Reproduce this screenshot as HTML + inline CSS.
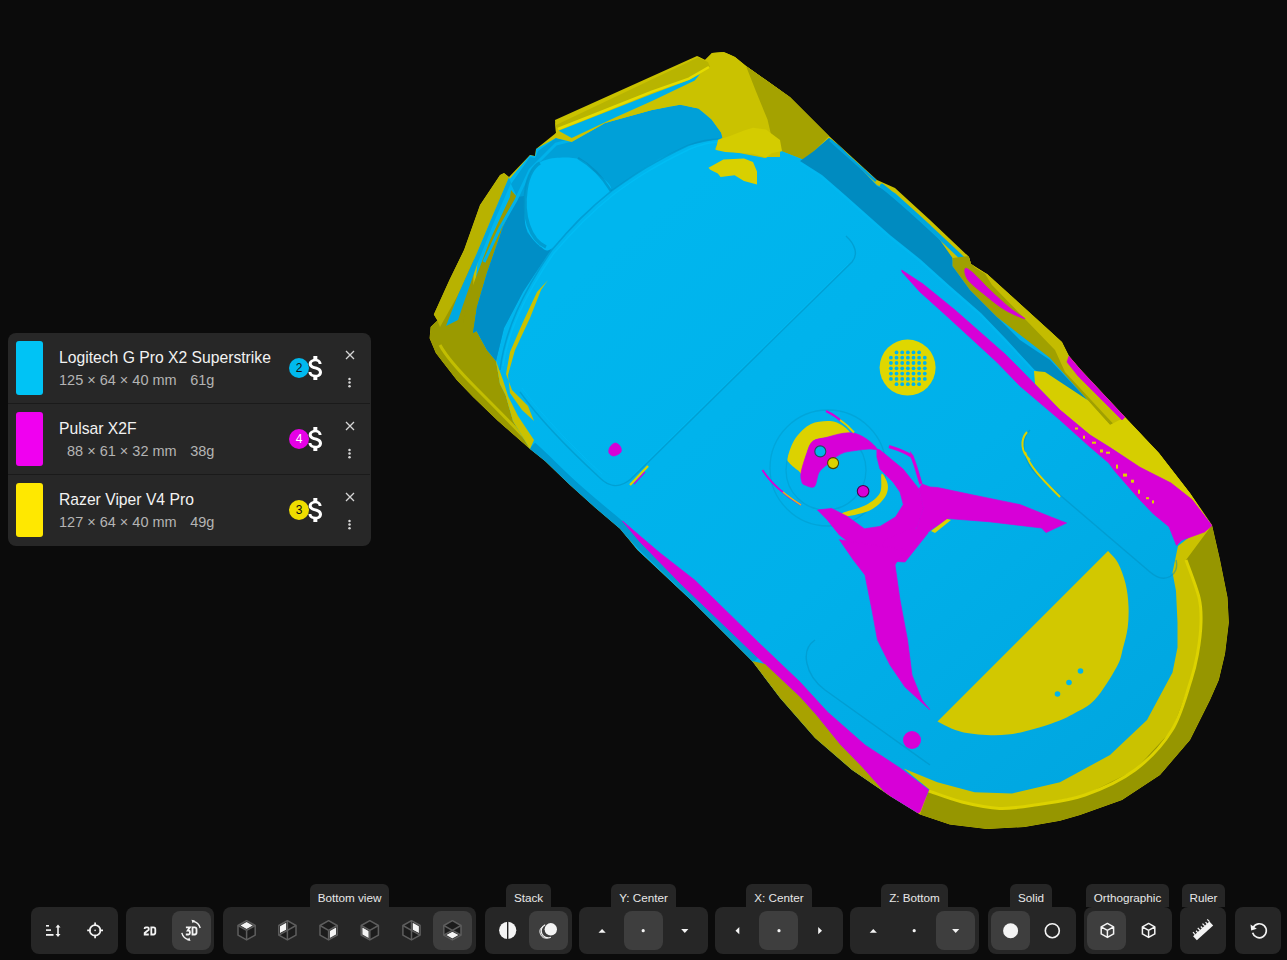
<!DOCTYPE html>
<html><head><meta charset="utf-8">
<style>
html,body{margin:0;padding:0;}
body{width:1287px;height:960px;background:#0b0b0b;position:relative;overflow:hidden;font-family:"Liberation Sans",sans-serif;color:#fff;}
#mouse{position:absolute;left:0;top:0;}
.panel{position:absolute;left:8px;top:333px;width:363px;height:213px;background:#272727;border-radius:8px;overflow:hidden;}
.row{position:absolute;left:0;width:362px;height:70px;}
.row.r1{top:0}.row.r2{top:71px}.row.r3{top:142px}
.sep{position:absolute;left:0;width:362px;height:1px;background:#1a1a1a;}
.sw{position:absolute;left:8px;top:8px;width:27px;height:54px;border-radius:3px;}
.tt{position:absolute;left:51px;top:15.5px;font-size:15.7px;color:#f2f2f2;white-space:nowrap;}
.st{position:absolute;left:51px;top:38.5px;font-size:14.5px;color:#b4b4b4;white-space:pre;}
.badge{position:absolute;left:281px;top:25px;width:20px;height:20px;border-radius:50%;font-size:12px;text-align:center;line-height:20px;}
.dol{position:absolute;left:292.3px;top:18.9px;width:32px;height:32px;}
.x{position:absolute;left:336.5px;top:16.5px;width:10px;height:10px;}
.kb{position:absolute;left:340px;top:44px;width:3px;height:11px;}
.grp{position:absolute;top:907px;height:47px;background:#262626;border-radius:8px;}
.sel{position:absolute;top:4px;width:39px;height:39px;background:#3e3e3e;border-radius:8px;}
.ic{position:absolute;}
.tip{position:absolute;top:884px;height:23px;background:#262626;border-radius:6px 6px 0 0;font-size:11.7px;color:#e8e8e8;text-align:center;line-height:28px;}
</style></head><body>
<svg id="mouse" width="1287" height="960" viewBox="0 0 1287 960">
<path d="M712.0,53.0 L724.0,52.0 L735.0,57.0 L746.0,66.0 L790.0,97.0 L829.0,136.0 L877.0,180.0 L895.0,188.0 L930.0,220.0 L969.0,257.0 L971.0,264.0 L987.0,274.0 L1062.0,342.0 L1069.0,356.0 L1081.0,370.0 L1125.0,417.0 L1159.0,453.0 L1190.0,493.0 L1212.0,525.0 L1220.0,560.0 L1227.5,597.5 L1228.8,622.5 L1225.0,653.8 L1218.8,680.0 L1210.0,700.0 L1190.0,740.0 L1160.0,775.0 L1122.0,800.0 L1080.0,815.0 L1060.0,820.8 L1024.4,827.0 L987.0,829.0 L949.8,824.6 L920.0,814.6 L890.0,796.0 L852.0,770.0 L815.0,738.0 L780.0,698.0 L752.0,661.0 L722.0,631.0 L692.0,601.0 L637.5,550.0 L620.0,528.8 L595.0,507.5 L570.0,485.0 L545.0,461.0 L530.0,449.0 L498.0,421.0 L473.0,397.0 L456.7,380.0 L446.2,366.5 L435.8,352.9 L429.6,338.3 L430.6,326.9 L437.4,320.6 L433.8,314.4 L449.4,280.0 L464.0,250.0 L480.0,205.0 L500.0,175.0 L504.0,173.0 L509.0,177.0 L530.0,155.0 L535.0,156.0 L536.0,149.0 L556.0,133.0 L555.0,120.0 L697.0,56.0 L705.0,60.0Z" fill="#cac200" />
<clipPath id="sil"><path d="M712.0,53.0 L724.0,52.0 L735.0,57.0 L746.0,66.0 L790.0,97.0 L829.0,136.0 L877.0,180.0 L895.0,188.0 L930.0,220.0 L969.0,257.0 L971.0,264.0 L987.0,274.0 L1062.0,342.0 L1069.0,356.0 L1081.0,370.0 L1125.0,417.0 L1159.0,453.0 L1190.0,493.0 L1212.0,525.0 L1220.0,560.0 L1227.5,597.5 L1228.8,622.5 L1225.0,653.8 L1218.8,680.0 L1210.0,700.0 L1190.0,740.0 L1160.0,775.0 L1122.0,800.0 L1080.0,815.0 L1060.0,820.8 L1024.4,827.0 L987.0,829.0 L949.8,824.6 L920.0,814.6 L890.0,796.0 L852.0,770.0 L815.0,738.0 L780.0,698.0 L752.0,661.0 L722.0,631.0 L692.0,601.0 L637.5,550.0 L620.0,528.8 L595.0,507.5 L570.0,485.0 L545.0,461.0 L530.0,449.0 L498.0,421.0 L473.0,397.0 L456.7,380.0 L446.2,366.5 L435.8,352.9 L429.6,338.3 L430.6,326.9 L437.4,320.6 L433.8,314.4 L449.4,280.0 L464.0,250.0 L480.0,205.0 L500.0,175.0 L504.0,173.0 L509.0,177.0 L530.0,155.0 L535.0,156.0 L536.0,149.0 L556.0,133.0 L555.0,120.0 L697.0,56.0 L705.0,60.0Z"/></clipPath><g clip-path="url(#sil)">
<path d="M429.6,338.3 L430.6,326.9 L437.4,320.6 L433.8,314.4 L449.4,280.0 L464.0,250.0 L474.0,250.0 L472.8,309.0 L476.6,331.0 L487.0,350.0 L496.0,361.0 L500.0,384.0 L505.6,395.0 L513.0,421.0 L530.0,449.0 L498.0,421.0 L473.0,397.0 L456.7,380.0 L446.2,366.5 L435.8,352.9Z" fill="#9a9a00" />
<path d="M440,345 C447,358 458,370 476,388 C490,402 505,417 528,441" stroke="#c2be00" stroke-width="3" fill="none"/>
<path d="M742.0,64.0 L746.0,66.0 L790.0,97.0 L829.0,136.0 L814.0,151.0 L810.0,162.0 L782.0,151.0 L767.0,123.0Z" fill="#a4a200" />
<defs><linearGradient id="bg1" gradientUnits="userSpaceOnUse" x1="620" y1="240" x2="1080" y2="780"><stop offset="0" stop-color="#00b6ee"/><stop offset="0.55" stop-color="#00b0ea"/><stop offset="1" stop-color="#00a7e1"/></linearGradient></defs>
<path d="M474.7,290.0 L478.8,250.0 L492.5,217.5 L508.8,180.0 L530.0,155.0 L535.0,156.0 L536.0,149.0 L556.0,138.0 L572.5,140.0 L610.0,122.5 L670.0,106.0 L684.0,105.0 L707.0,113.0 L722.0,134.0 L718.0,149.0 L765.0,158.0 L782.0,151.0 L810.0,162.0 L814.0,151.0 L829.0,138.0 L833.0,141.0 L877.0,185.0 L895.0,193.0 L930.0,225.0 L953.0,260.6 L961.0,268.7 L985.0,297.0 L1022.0,321.5 L1062.5,358.0 L1087.0,399.0 L1100.0,435.0 L1139.0,469.0 L1178.0,497.0 L1208.0,520.0 L1211.0,526.0 L1196.0,532.0 L1178.0,546.0 L1172.5,572.5 L1176.0,591.0 L1177.5,622.5 L1177.5,647.5 L1172.5,672.5 L1147.0,720.0 L1110.0,755.0 L1060.0,782.3 L1012.0,793.5 L974.6,792.2 L937.3,782.3 L903.7,768.6 L930.0,790.0 L915.0,816.0 L890.0,796.0 L852.0,770.0 L815.0,738.0 L780.0,698.0 L752.0,661.0 L722.0,631.0 L692.0,601.0 L637.5,550.0 L620.0,528.8 L595.0,507.5 L570.0,485.0 L545.0,461.0 L530.0,449.0 L513.0,421.0 L505.6,395.0 L500.0,384.0 L496.0,361.0 L487.0,350.0 L476.6,331.0 L472.8,309.0Z" fill="url(#bg1)" />
<path d="M1212.0,525.0 L1220.0,560.0 L1227.5,597.5 L1228.8,622.5 L1225.0,653.8 L1218.8,680.0 L1210.0,700.0 L1190.0,740.0 L1160.0,775.0 L1122.0,800.0 L1080.0,815.0 L1060.0,820.8 L1024.4,827.0 L987.0,829.0 L949.8,824.6 L920.0,814.6 L928.6,791.0 L962.0,802.0 L999.5,808.4 L1036.8,804.7 L1085.0,795.0 L1135.0,770.0 L1172.0,730.0 L1191.0,680.0 L1197.5,653.8 L1201.0,622.5 L1199.0,597.5 L1186.0,560.0Z" fill="#969600" />
<path d="M1186.0,560.0 C1188.2,566.2 1196.5,587.1 1199.0,597.5 C1201.5,607.9 1201.2,613.1 1201.0,622.5 C1200.8,631.9 1199.2,644.2 1197.5,653.8 C1195.8,663.3 1195.2,667.3 1191.0,680.0 C1186.8,692.7 1181.3,715.0 1172.0,730.0 C1162.7,745.0 1149.5,759.2 1135.0,770.0 C1120.5,780.8 1101.4,789.2 1085.0,795.0 C1068.6,800.8 1051.0,802.5 1036.8,804.7 C1022.5,806.9 1012.0,808.9 999.5,808.4 C987.0,807.9 973.8,804.9 962.0,802.0 C950.2,799.1 934.2,792.8 928.6,791.0" stroke="#dcd200" stroke-width="3" fill="none"/>
<path d="M500.0,175.0 L504.0,173.0 L509.0,177.0 L492.0,217.0 L476.0,255.0 L458.0,295.0 L440.0,327.0 L437.4,320.6 L433.8,314.4 L449.4,280.0 L464.0,250.0 L480.0,205.0Z" fill="#b8b200" />
<path d="M509.0,177.0 L511.0,183.0 L494.0,222.0 L478.0,262.0 L463.0,305.0 L458.0,320.0 L446.0,326.0 L458.0,295.0 L476.0,255.0 L492.0,217.0Z" fill="#00a8e0" />
<path d="M511.0,190.0 L517.0,197.0 L503.0,227.0 L487.0,273.0 L477.0,307.0 L473.0,333.0 L463.0,323.0 L470.0,293.0 L490.0,240.0 L510.0,197.0Z" fill="#9a9a00" />
<path d="M496.0,361.0 L487.0,350.0 L476.6,331.0 L473.0,333.0 L477.0,307.0 L487.0,273.0 L503.0,227.0 L517.0,197.0 L511.0,184.0 L530.0,157.0 L535.0,158.0 L538.0,151.0 L556.0,138.0 L571.7,142.0 L605.0,123.0 L652.0,110.0 L680.0,104.7 L698.5,108.4 L711.6,119.6 L721.0,132.6 L722.7,138.2 L718.0,139.0 L688.0,145.4 L660.0,158.5 L642.0,169.5 L611.0,191.3 L580.0,218.0 L551.8,248.4 L523.0,292.0 L504.0,328.0Z" fill="#00a0d8" />
<path d="M496.0,361.0 L487.0,350.0 L476.6,331.0 L473.0,333.0 L477.0,307.0 L487.0,273.0 L503.0,227.0 L517.0,197.0 L524.0,196.0 L527.0,232.0 L540.0,247.0 L551.8,248.4 L523.0,292.0 L504.0,328.0Z" fill="#008ec6" />
<path d="M484,262 L500,228 L516,200 L530,170 L556,144 L572,140" stroke="#00b2ea" stroke-width="3" fill="none"/>
<path d="M524.6,215.0 C524.4,207.2 525.0,193.3 527.0,185.0 C529.0,176.7 531.9,169.5 536.6,165.0 C541.3,160.5 547.8,158.9 555.0,158.0 C562.2,157.1 573.3,157.1 580.0,159.4 C586.7,161.7 589.8,166.7 595.0,172.0 C600.2,177.3 613.5,183.6 611.0,191.3 C608.5,199.0 589.9,208.5 580.0,218.0 C570.1,227.5 558.5,243.7 551.8,248.4 C545.1,253.1 544.0,248.7 540.0,246.0 C536.0,243.3 530.6,237.2 528.0,232.0 C525.4,226.8 524.8,222.8 524.6,215.0Z" fill="#00b9f2" />
<path d="M546,247 C530,240 522,215 526,190 C528,175 534,166 540,163" stroke="#0093c6" stroke-width="3.5" fill="none" opacity="0.75"/>
<path d="M578,158 C592,166 603,178 611,191" stroke="#0088bb" stroke-width="2.5" fill="none" opacity="0.6"/>
<path d="M500,370 C505,330 523,292 551.8,250 C575,222 595,204 611,191.3 C630,178 650,163 688,145.4 C700,141 712,139 720,139" stroke="#0090c4" stroke-width="1.6" fill="none" opacity="0.6"/><path d="M503,366 C508,330 526,294 554,253 C578,225 598,207 613,195 C632,181 652,167 690,149 C702,144 712,142 720,142" stroke="#00c2f8" stroke-width="1.4" fill="none" opacity="0.6"/>
<path d="M556.0,138.0 L571.7,142.0 L605.0,123.0 L652.0,110.0 L680.0,104.7 L698.5,108.4 L711.6,119.6 L721.0,132.6 L722.7,138.2 L719.0,140.0 L715.0,149.4 L745.0,153.0 L764.0,157.0 L780.0,157.0 L780.0,90.0 L745.0,63.6 L732.0,54.3 L719.0,51.5 L704.0,52.5 L698.5,56.2 L554.0,123.3Z" fill="#cac200" />
<path d="M558.6,130.8 L596.0,116.0 L652.0,94.0 L689.0,80.0 L700.0,74.0 L694.8,80.4 L652.0,101.0 L614.6,117.7 L571.7,138.0Z" fill="#00b0e8" />
<path d="M555,125.5 L698,57.5 L708,62 L710,67 L689,78.6 L652,91.6 L596,114 L558.6,129 Z" fill="#b8b400"/>
<path d="M558,129 L596,114 L652,91.6 L689,78.6 L709,67" stroke="#e4dc00" stroke-width="2.5" fill="none"/>
<path d="M745.0,63.6 L790.0,97.0 L829.0,136.0 L814.0,151.0 L810.0,162.0 L782.0,151.0 L780.0,143.8 L767.5,130.8 L771.0,134.5 L767.5,119.6 L756.0,91.6Z" fill="#a4a200" />
<path d="M718.0,139.8 L730.0,136.0 L744.0,130.5 L753.0,127.7 L766.0,129.6 L780.0,140.0 L782.0,151.0 L772.0,153.0 L766.3,157.6 L753.0,153.8 L725.3,152.0 L716.0,150.0Z" fill="#d4cc00" />
<path d="M814.0,151.0 L829.0,138.0 L840.0,146.0 L877.0,186.0 L895.0,195.0 L930.0,226.0 L952.5,258.0 L952.5,266.0 L970.0,290.0 L997.0,317.0 L1020.0,340.0 L1050.0,360.0 L1087.5,400.0 L1034.0,369.5 L1006.0,339.0 L981.0,313.0 L950.0,286.0 L920.0,259.0 L890.0,235.0 L845.0,195.0 L822.0,175.0 L800.0,161.0Z" fill="#008bc0" />
<path d="M800,163 L822,177 L845,197 L890,237 L920,261 L950,288 L981,315 L1006,341 L1034,371" stroke="#00b8f0" stroke-width="2" fill="none" opacity="0.8"/>
<path d="M830,140 L876,181" stroke="#00a4dc" stroke-width="2.5" fill="none"/><path d="M882,186 C895,196 920,218 962,258" stroke="#00a6de" stroke-width="4.5" fill="none" stroke-linecap="round"/>
<path d="M966,254 L971,262 L975,267.5 L985,273.75 L992.5,275" stroke="#c8be00" stroke-width="2" fill="none"/>
<path d="M952.5,258.0 L952.5,266.0 L970.0,290.0 L997.0,317.0 L1028.0,341.0 L1050.0,358.0 L1087.5,400.0 L1110.0,425.0 L1125.0,417.0 L1081.0,370.0 L1069.0,356.0 L1062.0,342.0 L992.5,275.0 L985.0,273.8 L975.0,267.5 L971.0,262.5 L968.8,256.0Z" fill="#a0a000" />
<path d="M985.0,273.8 L992.5,275.0 L1062.0,342.0 L1069.0,356.0 L1081.0,370.0 L1125.0,417.0 L1159.0,453.0 L1190.0,493.0 L1210.0,524.0 L1200.0,522.0 L1175.0,490.0 L1140.0,452.0 L1105.0,415.0 L1065.0,372.0 L1055.0,350.0 L992.0,285.0Z" fill="#c4bc00" />
<path d="M1034.0,371.0 L1045.0,372.0 L1087.5,400.0 L1110.0,425.0 L1125.0,417.0 L1159.0,453.0 L1190.0,493.0 L1212.0,525.6 L1192.0,499.6 L1171.0,483.0 L1140.0,467.3 L1110.0,447.5 L1090.0,435.0 L1060.0,410.0 L1035.0,384.0Z" fill="#d6ce00" />
<path d="M1069.0,356.0 L1081.0,370.0 L1125.0,417.0 L1122.0,420.0 L1078.0,376.0 L1067.0,362.0Z" fill="#d700d7" stroke="#d700d7" stroke-width="0.7"/>
<path d="M965.0,268.8 C965.7,267.4 967.8,268.5 972.0,272.0 C976.2,275.5 983.7,284.0 990.0,290.0 C996.3,296.0 1004.2,303.2 1010.0,308.0 C1015.8,312.8 1025.8,318.4 1025.0,318.8 C1024.2,319.1 1011.7,314.0 1005.0,310.0 C998.3,306.0 991.2,300.0 985.0,295.0 C978.8,290.0 971.3,284.4 968.0,280.0 C964.7,275.6 964.3,270.1 965.0,268.8Z" fill="#d700d7" stroke="#d700d7" stroke-width="0.7"/>
<path d="M532.0,446.0 C534.2,448.0 538.7,452.0 545.0,458.0 C551.3,464.0 561.7,474.3 570.0,482.0 C578.3,489.7 586.7,496.8 595.0,504.0 C603.3,511.2 612.5,518.3 620.0,525.0 C627.5,531.7 632.0,536.2 640.0,544.0 C648.0,551.8 659.3,563.3 668.0,572.0 C676.7,580.7 683.0,587.0 692.0,596.0 C701.0,605.0 711.3,615.3 722.0,626.0 C732.7,636.7 750.3,654.3 756.0,660.0" stroke="#009ad0" stroke-width="9" fill="none"/>
<path d="M528.0,452.0 C531.7,455.3 541.3,464.0 550.0,472.0 C558.7,480.0 570.0,491.0 580.0,500.0 C590.0,509.0 600.0,517.3 610.0,526.0 C620.0,534.7 628.3,541.3 640.0,552.0 C651.7,562.7 667.5,577.7 680.0,590.0 C692.5,602.3 709.2,620.0 715.0,626.0" stroke="#00aee6" stroke-width="2" fill="none" opacity="0.6"/>
<path d="M520,392 C540,420 575,455 600,478 C607,485 618,490 631,479 L852,262 C858,255 856,245 846,236" stroke="#0090c0" stroke-width="1.4" fill="none" opacity="0.55"/>
<path d="M522,388 C542,416 577,451 602,474 M633,475 L848,264" stroke="#00c0f8" stroke-width="1" fill="none" opacity="0.5"/>
<circle cx="828" cy="468" r="58" stroke="#0096c6" stroke-width="1.3" fill="none" opacity="0.45"/>
<circle cx="826" cy="470" r="40" stroke="#0096c6" stroke-width="1.3" fill="none" opacity="0.45"/>
<path d="M1030,430 C1020,440 1022,462 1040,478 L1150,572 C1165,585 1180,575 1176,560" stroke="#0090c0" stroke-width="1.4" fill="none" opacity="0.5"/>
<path d="M815,640 C800,650 805,675 825,690 L930,765" stroke="#0090c0" stroke-width="1.4" fill="none" opacity="0.5"/>
<path d="M901.7,270.0 L923.0,284.0 L955.0,310.0 L1005.0,354.0 L1020.0,369.0 L1060.0,410.0 L1090.0,435.0 L1110.0,447.5 L1140.0,467.3 L1171.0,483.0 L1192.0,499.6 L1212.0,525.6 L1204.6,531.9 L1181.7,540.2 L1176.5,545.4 L1169.0,526.7 L1153.5,514.0 L1140.0,500.0 L1113.8,470.0 L1108.8,463.0 L1090.0,447.0 L1060.0,420.0 L1020.0,386.0 L996.7,362.0 L946.7,316.0 L920.0,292.0 L902.0,272.0Z" fill="#d700d7" stroke="#d700d7" stroke-width="0.7"/>
<path d="M622.5,521.0 L660.0,553.0 L694.6,580.0 L758.7,642.7 L800.0,682.0 L827.5,712.0 L865.0,745.0 L900.0,768.0 L928.6,789.8 L920.0,812.0 L912.4,815.9 L900.0,809.6 L862.0,767.0 L840.0,744.4 L816.2,715.0 L800.0,697.0 L752.9,653.0 L680.0,583.0 L640.0,542.0Z" fill="#d700d7" stroke="#d700d7" stroke-width="0.7"/>
<path d="M752.0,661.0 L780.0,698.0 L815.0,738.0 L852.0,770.0 L890.0,796.0 L912.4,815.9 L900.0,809.6 L862.0,767.0 L840.0,744.4 L816.2,715.0 L800.0,697.0 L765.0,664.0Z" fill="#a8a200" />
<path d="M548.0,280.0 L541.0,290.0 L530.0,318.0 L515.0,350.0 L508.0,375.0 L510.0,393.0 L522.0,410.0 L534.0,421.0 L528.0,406.0 L512.0,390.0 L506.0,374.0 L510.0,352.0 L523.0,322.0 L537.0,292.0Z" fill="#cac200" />
<path d="M496.0,361.0 L500.0,384.0 L505.6,395.0 L513.0,421.0 L530.0,449.0 L534.0,440.0 L518.0,416.0 L508.0,396.0 L503.0,380.0Z" fill="#cac200" />
<path d="M1108.0,551.0 C1109.7,553.0 1115.1,557.5 1118.0,563.0 C1120.9,568.5 1123.8,576.5 1125.6,583.7 C1127.3,590.9 1128.2,598.7 1128.5,606.0 C1128.8,613.3 1128.6,620.5 1127.7,627.5 C1126.8,634.5 1124.8,641.5 1123.0,648.0 C1121.2,654.5 1121.5,658.2 1116.8,666.8 C1112.1,675.4 1102.0,691.9 1095.0,699.6 C1088.0,707.3 1082.3,709.0 1075.0,713.0 C1067.7,717.0 1062.2,720.1 1051.0,723.7 C1039.8,727.3 1022.0,733.2 1007.5,734.6 C993.0,736.0 975.4,734.6 963.7,732.4 C952.0,730.2 941.9,723.3 937.5,721.5 L1108,551 Z" fill="#d2c800"/>
<circle cx="907.6" cy="367.6" r="28" fill="#dfd700"/>
<circle cx="890.9" cy="357.7" r="1.9" fill="#00b4ee"/><circle cx="890.9" cy="363.0" r="1.9" fill="#00b4ee"/><circle cx="890.9" cy="368.3" r="1.9" fill="#00b4ee"/><circle cx="890.9" cy="373.6" r="1.9" fill="#00b4ee"/><circle cx="890.9" cy="378.9" r="1.9" fill="#00b4ee"/><circle cx="896.5" cy="352.4" r="1.9" fill="#00b4ee"/><circle cx="896.5" cy="357.7" r="1.9" fill="#00b4ee"/><circle cx="896.5" cy="363.0" r="1.9" fill="#00b4ee"/><circle cx="896.5" cy="368.3" r="1.9" fill="#00b4ee"/><circle cx="896.5" cy="373.6" r="1.9" fill="#00b4ee"/><circle cx="896.5" cy="378.9" r="1.9" fill="#00b4ee"/><circle cx="896.5" cy="384.2" r="1.9" fill="#00b4ee"/><circle cx="902.2" cy="352.4" r="1.9" fill="#00b4ee"/><circle cx="902.2" cy="357.7" r="1.9" fill="#00b4ee"/><circle cx="902.2" cy="363.0" r="1.9" fill="#00b4ee"/><circle cx="902.2" cy="368.3" r="1.9" fill="#00b4ee"/><circle cx="902.2" cy="373.6" r="1.9" fill="#00b4ee"/><circle cx="902.2" cy="378.9" r="1.9" fill="#00b4ee"/><circle cx="902.2" cy="384.2" r="1.9" fill="#00b4ee"/><circle cx="907.9" cy="352.4" r="1.9" fill="#00b4ee"/><circle cx="907.9" cy="357.7" r="1.9" fill="#00b4ee"/><circle cx="907.9" cy="363.0" r="1.9" fill="#00b4ee"/><circle cx="907.9" cy="368.3" r="1.9" fill="#00b4ee"/><circle cx="907.9" cy="373.6" r="1.9" fill="#00b4ee"/><circle cx="907.9" cy="378.9" r="1.9" fill="#00b4ee"/><circle cx="907.9" cy="384.2" r="1.9" fill="#00b4ee"/><circle cx="913.5" cy="352.4" r="1.9" fill="#00b4ee"/><circle cx="913.5" cy="357.7" r="1.9" fill="#00b4ee"/><circle cx="913.5" cy="363.0" r="1.9" fill="#00b4ee"/><circle cx="913.5" cy="368.3" r="1.9" fill="#00b4ee"/><circle cx="913.5" cy="373.6" r="1.9" fill="#00b4ee"/><circle cx="913.5" cy="378.9" r="1.9" fill="#00b4ee"/><circle cx="913.5" cy="384.2" r="1.9" fill="#00b4ee"/><circle cx="919.1" cy="352.4" r="1.9" fill="#00b4ee"/><circle cx="919.1" cy="357.7" r="1.9" fill="#00b4ee"/><circle cx="919.1" cy="363.0" r="1.9" fill="#00b4ee"/><circle cx="919.1" cy="368.3" r="1.9" fill="#00b4ee"/><circle cx="919.1" cy="373.6" r="1.9" fill="#00b4ee"/><circle cx="919.1" cy="378.9" r="1.9" fill="#00b4ee"/><circle cx="919.1" cy="384.2" r="1.9" fill="#00b4ee"/><circle cx="924.8" cy="357.7" r="1.9" fill="#00b4ee"/><circle cx="924.8" cy="363.0" r="1.9" fill="#00b4ee"/><circle cx="924.8" cy="368.3" r="1.9" fill="#00b4ee"/><circle cx="924.8" cy="373.6" r="1.9" fill="#00b4ee"/><circle cx="924.8" cy="378.9" r="1.9" fill="#00b4ee"/>
<path d="M787.8,456.9 C788.8,452.7 791.7,443.5 795.6,438.0 C799.5,432.5 805.3,426.8 811.0,424.0 C816.7,421.2 824.8,420.7 830.0,421.0 C835.2,421.3 839.1,423.5 842.5,425.6 C845.9,427.7 850.3,432.1 850.3,433.4 C850.3,434.7 846.4,432.8 842.5,433.4 C838.6,434.0 831.9,436.0 826.9,437.3 C821.9,438.6 816.2,438.5 812.8,441.2 C809.4,444.0 808.4,448.5 806.6,453.8 C804.8,459.0 803.2,469.6 801.9,472.5 C800.6,475.4 800.8,472.6 798.8,471.0 C796.7,469.4 791.2,465.4 789.4,463.0 C787.6,460.6 786.8,461.1 787.8,456.9Z" fill="#dcd200" />
<path d="M881.6,474.0 C882.9,472.7 887.3,481.1 887.8,485.0 C888.3,488.9 887.6,493.3 884.7,497.5 C881.8,501.7 876.9,506.9 870.6,510.0 C864.3,513.1 851.7,515.8 847.0,516.2 C842.3,516.8 839.3,514.9 842.5,513.0 C845.7,511.1 859.8,508.4 866.0,505.0 C872.2,501.6 877.4,498.0 880.0,492.8 C882.6,487.6 880.3,475.3 881.6,474.0Z" fill="#dcd200" />
<path d="M801.9,481.9 C801.2,479.8 800.3,477.2 801.1,472.5 C801.9,467.8 804.7,459.0 806.6,453.8 C808.5,448.5 809.4,444.0 812.8,441.2 C816.2,438.5 821.9,438.6 826.9,437.3 C831.9,436.0 837.8,434.0 842.5,433.4 C847.2,432.8 850.8,432.3 855.0,433.4 C859.2,434.4 863.9,437.1 867.5,439.7 C871.1,442.3 876.6,447.4 876.9,449.0 C877.1,450.6 872.6,448.7 869.0,449.0 C865.4,449.3 859.7,449.8 855.0,450.6 C850.3,451.4 845.7,451.4 841.0,453.8 C836.3,456.1 830.6,461.6 826.9,464.7 C823.2,467.8 821.1,468.9 819.0,472.5 C816.9,476.1 816.7,484.5 814.4,486.6 C812.1,488.7 807.1,485.8 805.0,485.0 C802.9,484.2 802.5,484.0 801.9,481.9Z" fill="#d700d7" stroke="#d700d7" stroke-width="0.7"/>
<path d="M817.5,510.0 L826.9,519.4 L839.4,535.0 L851.9,544.4 L867.5,549.0 L880.0,554.0 L895.5,548.0 L910.0,535.0 L917.3,526.4 L923.5,507.7 L919.0,489.0 L903.0,469.0 L880.0,450.0 L876.9,449.0 L876.9,456.9 L880.0,469.0 L893.0,482.0 L900.0,492.0 L903.3,504.6 L895.5,517.0 L880.0,526.4 L864.4,528.8 L847.0,516.2 L831.6,508.4Z" fill="#d700d7" stroke="#d700d7" stroke-width="0.7"/>
<path d="M919.0,489.0 L922.0,484.0 L930.0,487.0 L937.5,487.5 L973.0,495.0 L1020.0,504.6 L1051.0,517.0 L1066.5,523.0 L1046.0,532.6 L1041.6,528.0 L988.8,521.7 L948.4,518.6 L931.3,529.5 L903.3,554.3 L917.3,526.4 L923.5,507.7Z" fill="#d700d7" stroke="#d700d7" stroke-width="0.7"/>
<path d="M889,446.5 C897,449 906,452 912,456.5 C916,466 918,475 921,484" stroke="#d700d7" stroke-width="3.2" fill="none"/><path d="M910,451 L913.5,456 L911,459Z" fill="#d700d7"/>
<path d="M885.0,540.0 L912.0,528.0 L928.0,533.0 L905.0,562.0 L875.0,560.0Z" fill="#d700d7" stroke="#d700d7" stroke-width="0.7"/>
<path d="M839.4,539.7 L853.4,560.0 L865.0,575.0 L872.0,610.0 L877.5,640.0 L890.0,665.0 L905.0,687.0 L930.0,710.0 L922.0,700.0 L912.0,675.0 L907.5,640.0 L900.0,600.0 L895.0,565.0 L900.0,556.0 L909.7,550.6Z" fill="#d700d7" stroke="#d700d7" stroke-width="0.7"/>
<path d="M931.0,531.0 L947.0,519.0 L951.0,520.0 L935.0,533.0Z" fill="#dcd200" />
<path d="M762.5,470 C770,482 785,496 801,505" stroke="#d700d7" stroke-width="1.8" fill="none"/>
<path d="M783,492 C789,497 795,501 801,505" stroke="#dcd200" stroke-width="1.2" fill="none"/>
<path d="M826,411 C832,414 838,418 841,421" stroke="#d700d7" stroke-width="2" fill="none"/>
<path d="M840,420 C846,424 851,429 854,432.5" stroke="#dcd200" stroke-width="2" fill="none"/>
<path d="M1027,432 C1020,440 1021,452 1030,460 M1025,452 C1030,468 1045,482 1060,497" stroke="#dcd200" stroke-width="2" fill="none"/>
<path d="M630,485 L648,466" stroke="#dcd200" stroke-width="2.2" fill="none"/><path d="M634,484 L645,472" stroke="#d700d7" stroke-width="1.2" fill="none"/>
<rect x="1075" y="427.5" width="3" height="2" fill="#dcd200"/>
<rect x="1083" y="435.7" width="2" height="3" fill="#dcd200"/>
<rect x="1092" y="441.7" width="4" height="2" fill="#dcd200"/>
<rect x="1100" y="449.5" width="3" height="3" fill="#dcd200"/>
<rect x="1106" y="451.7" width="4" height="2" fill="#dcd200"/>
<rect x="1116" y="464.6" width="2" height="4" fill="#dcd200"/>
<rect x="1123" y="473.6" width="4" height="3" fill="#dcd200"/>
<rect x="1131" y="479.7" width="3" height="3" fill="#dcd200"/>
<rect x="1138" y="489.7" width="2" height="4" fill="#dcd200"/>
<rect x="1146" y="497.2" width="3" height="2" fill="#dcd200"/>
<rect x="1152" y="500.4" width="2" height="3" fill="#dcd200"/>
<circle cx="912" cy="740" r="9" fill="#d700d7"/>
<path d="M610.0,447.0 C611.0,445.3 613.3,443.2 615.0,443.0 C616.7,442.8 619.0,444.5 620.0,446.0 C621.0,447.5 622.0,450.3 621.0,452.0 C620.0,453.7 616.0,455.8 614.0,456.0 C612.0,456.2 609.7,454.5 609.0,453.0 C608.3,451.5 609.0,448.7 610.0,447.0Z" fill="#d700d7" stroke="#d700d7" stroke-width="0.7"/>
<circle cx="820.3" cy="451.4" r="5.5" fill="#00b5ed" stroke="#1d4f5e" stroke-width="1.1"/>
<circle cx="833.1" cy="463.1" r="5.5" fill="#dcd300" stroke="#4a4400" stroke-width="1.1"/>
<circle cx="863.1" cy="491.25" r="5.8" fill="#d700d7" stroke="#4d004d" stroke-width="1.1"/>
<circle cx="1057.5" cy="694" r="2.8" fill="#00b5ed"/>
<circle cx="1069" cy="682.5" r="2.8" fill="#00b5ed"/>
<circle cx="1080.5" cy="671" r="2.8" fill="#00b5ed"/>
<path d="M708.5,167.8 L723.4,159.4 L744.0,158.5 L753.0,162.0 L757.0,171.5 L757.0,184.6 L744.0,181.0 L734.6,175.3 L720.6,177.0 L717.8,173.4 L710.3,169.7Z" fill="#d8d000" />
</g>
</svg>

<div class="panel">
  <div class="row r1">
    <div class="sw" style="background:#00c3f5"></div>
    <div class="tt">Logitech G Pro X2 Superstrike</div>
    <div class="st">125 × 64 × 40 mm<span style="margin-left:13.5px">61g</span></div>
    <div class="badge" style="background:#00b9ee;color:#111">2</div>
    <svg class="dol" viewBox="0 0 24 24"><path fill="#fff" d="M11.8 10.9c-2.27-.59-3-1.2-3-2.15 0-1.09 1.01-1.85 2.7-1.85 1.78 0 2.44.85 2.5 2.1h2.21c-.07-1.72-1.12-3.3-3.21-3.81V3h-3v2.16c-1.94.42-3.5 1.68-3.5 3.61 0 2.310 1.91 3.46 4.7 4.13 2.5.6 3 1.48 3 2.41 0 .69-.49 1.79-2.7 1.79-2.060 0-2.87-.92-2.98-2.1h-2.2c.12 2.19 1.76 3.42 3.68 3.83V21h3v-2.15c1.95-.37 3.5-1.5 3.5-3.55 0-2.84-2.43-3.81-4.7-4.4z"/></svg>
    <svg class="x" viewBox="-0.5 -0.5 10 10"><path d="M0.5,0.5 L8.5,8.5 M8.5,0.5 L0.5,8.5" stroke="#d6d6d6" stroke-width="1.3"/></svg>
    <svg class="kb" viewBox="0 0 3 11"><circle cx="1.5" cy="2" r="1.25" fill="#d6d6d6"/><circle cx="1.5" cy="5.6" r="1.25" fill="#d6d6d6"/><circle cx="1.5" cy="9.2" r="1.25" fill="#d6d6d6"/></svg>
  </div>
  <div class="sep" style="top:70px"></div>
  <div class="row r2">
    <div class="sw" style="background:#f000f0"></div>
    <div class="tt">Pulsar X2F</div>
    <div class="st">  88 × 61 × 32 mm<span style="margin-left:13.5px">38g</span></div>
    <div class="badge" style="background:#e600e6;color:#fff">4</div>
    <svg class="dol" viewBox="0 0 24 24"><path fill="#fff" d="M11.8 10.9c-2.27-.59-3-1.2-3-2.15 0-1.09 1.01-1.85 2.7-1.85 1.78 0 2.44.85 2.5 2.1h2.21c-.07-1.72-1.12-3.3-3.21-3.81V3h-3v2.16c-1.94.42-3.5 1.68-3.5 3.61 0 2.310 1.91 3.46 4.7 4.13 2.5.6 3 1.48 3 2.41 0 .69-.49 1.79-2.7 1.79-2.060 0-2.87-.92-2.98-2.1h-2.2c.12 2.19 1.76 3.42 3.68 3.83V21h3v-2.15c1.95-.37 3.5-1.5 3.5-3.55 0-2.84-2.43-3.81-4.7-4.4z"/></svg>
    <svg class="x" viewBox="-0.5 -0.5 10 10"><path d="M0.5,0.5 L8.5,8.5 M8.5,0.5 L0.5,8.5" stroke="#d6d6d6" stroke-width="1.3"/></svg>
    <svg class="kb" viewBox="0 0 3 11"><circle cx="1.5" cy="2" r="1.25" fill="#d6d6d6"/><circle cx="1.5" cy="5.6" r="1.25" fill="#d6d6d6"/><circle cx="1.5" cy="9.2" r="1.25" fill="#d6d6d6"/></svg>
  </div>
  <div class="sep" style="top:141px"></div>
  <div class="row r3">
    <div class="sw" style="background:#ffe800"></div>
    <div class="tt">Razer Viper V4 Pro</div>
    <div class="st">127 × 64 × 40 mm<span style="margin-left:13.5px">49g</span></div>
    <div class="badge" style="background:#f0de00;color:#111">3</div>
    <svg class="dol" viewBox="0 0 24 24"><path fill="#fff" d="M11.8 10.9c-2.27-.59-3-1.2-3-2.15 0-1.09 1.01-1.85 2.7-1.85 1.78 0 2.44.85 2.5 2.1h2.21c-.07-1.72-1.12-3.3-3.21-3.81V3h-3v2.16c-1.94.42-3.5 1.68-3.5 3.61 0 2.310 1.91 3.46 4.7 4.13 2.5.6 3 1.48 3 2.41 0 .69-.49 1.79-2.7 1.79-2.060 0-2.87-.92-2.98-2.1h-2.2c.12 2.19 1.76 3.42 3.68 3.83V21h3v-2.15c1.95-.37 3.5-1.5 3.5-3.55 0-2.84-2.43-3.81-4.7-4.4z"/></svg>
    <svg class="x" viewBox="-0.5 -0.5 10 10"><path d="M0.5,0.5 L8.5,8.5 M8.5,0.5 L0.5,8.5" stroke="#d6d6d6" stroke-width="1.3"/></svg>
    <svg class="kb" viewBox="0 0 3 11"><circle cx="1.5" cy="2" r="1.25" fill="#d6d6d6"/><circle cx="1.5" cy="5.6" r="1.25" fill="#d6d6d6"/><circle cx="1.5" cy="9.2" r="1.25" fill="#d6d6d6"/></svg>
  </div>
</div>

<!-- toolbar -->
<div class="tip" style="left:310px;width:79px">Bottom view</div>
<div class="tip" style="left:506px;width:45px">Stack</div>
<div class="tip" style="left:611px;width:65px">Y: Center</div>
<div class="tip" style="left:746px;width:66px">X: Center</div>
<div class="tip" style="left:881px;width:67px">Z: Bottom</div>
<div class="tip" style="left:1010px;width:42px">Solid</div>
<div class="tip" style="left:1086px;width:83px">Orthographic</div>
<div class="tip" style="left:1182px;width:43px">Ruler</div>

<div class="grp" style="left:31px;width:87px"></div>
<div class="grp" style="left:126px;width:88px"><div class="sel" style="left:46px"></div></div>
<div class="grp" style="left:223px;width:253px"><div class="sel" style="left:210px"></div></div>
<div class="grp" style="left:485px;width:87px"><div class="sel" style="left:44px"></div></div>
<div class="grp" style="left:579px;width:129px"><div class="sel" style="left:45px"></div></div>
<div class="grp" style="left:715px;width:128px"><div class="sel" style="left:44px"></div></div>
<div class="grp" style="left:850px;width:129px"><div class="sel" style="left:86px"></div></div>
<div class="grp" style="left:988px;width:88px"><div class="sel" style="left:3px"></div></div>
<div class="grp" style="left:1084px;width:88px"><div class="sel" style="left:3px"></div></div>
<div class="grp" style="left:1180px;width:46px"></div>
<div class="grp" style="left:1235px;width:46px"></div>

<svg id="icons" width="1287" height="960" style="position:absolute;left:0;top:0">
<g fill="#f4f4f4"><rect x="46" y="925" width="3" height="1.6"/><rect x="46" y="929.3" width="5" height="1.6"/><rect x="46" y="934" width="7.5" height="1.8"/></g>
<path d="M58,926 V935.5" stroke="#f4f4f4" stroke-width="1.6"/><path d="M55.5,927.6 L58,924.6 L60.5,927.6Z M55.5,934 L58,937 L60.5,934Z" fill="#f4f4f4"/>
<circle cx="95.1" cy="930.4" r="5.3" fill="none" stroke="#f4f4f4" stroke-width="1.7"/><path d="M95.1,922.5 V926 M95.1,934.8 V938.3 M87.2,930.4 H90.7 M99.5,930.4 H103" stroke="#f4f4f4" stroke-width="1.7"/><circle cx="95.1" cy="930.4" r="0.8" fill="#f4f4f4"/>
<g transform="translate(143.8,926.4)" fill="none" stroke="#f4f4f4" stroke-width="1.8" stroke-linejoin="miter"><path d="M0.9,2.6 V1.9 Q0.9,0.9 1.9,0.9 H3.9 Q4.9,0.9 4.9,1.9 V3.4 L0.9,6.6 V8.1 H5"/><path transform="translate(6.6,0)" d="M0.9,0.9 H3.1 Q4.9,0.9 4.9,2.8 V6.2 Q4.9,8.1 3.1,8.1 H0.9 Z"/></g>
<g transform="translate(185.0,926.4)" fill="none" stroke="#f4f4f4" stroke-width="1.8" stroke-linejoin="miter"><path d="M0.9,0.9 H4.9 L2.7,4.1 H3.4 Q4.9,4.1 4.9,5.6 V6.6 Q4.9,8.1 3.4,8.1 H0.8"/><path transform="translate(6.6,0)" d="M0.9,0.9 H3.1 Q4.9,0.9 4.9,2.8 V6.2 Q4.9,8.1 3.1,8.1 H0.9 Z"/></g>
<path d="M193,921.2 A9.3,9.3 0 0 1 200.2,928" stroke="#f4f4f4" stroke-width="1.4" fill="none"/><path d="M189,939.6 A9.3,9.3 0 0 1 181.8,932.8" stroke="#f4f4f4" stroke-width="1.4" fill="none"/>
<path d="M191.5,919.8 L195,920.6 L192.6,923.2Z M190.5,941 L187,940.2 L189.4,937.6Z" fill="#f4f4f4"/>
<path d="M246.60,920.70 L255.20,925.50 L255.20,935.10 L246.60,939.90 L238.00,935.10 L238.00,925.50Z" fill="#1c1c1c" stroke="#5e5e5e" stroke-width="1.5" stroke-linejoin="round"/><path d="M246.60,922.04 L252.79,925.50 L246.60,928.96 L240.41,925.50Z" fill="#f4f4f4"/><path d="M246.60,930.30 L238.00,925.50" stroke="#5e5e5e" stroke-width="1.5"/><path d="M246.60,930.30 L255.20,925.50" stroke="#5e5e5e" stroke-width="1.5"/><path d="M246.60,930.30 L246.60,939.90" stroke="#5e5e5e" stroke-width="1.5"/>
<path d="M287.40,920.70 L296.00,925.50 L296.00,935.10 L287.40,939.90 L278.80,935.10 L278.80,925.50Z" fill="#1c1c1c" stroke="#5e5e5e" stroke-width="1.5" stroke-linejoin="round"/><path d="M280.00,926.17 L286.20,922.72 L286.20,929.63 L280.00,933.08Z" fill="#f4f4f4"/><path d="M287.40,920.70 L287.40,939.90" stroke="#5e5e5e" stroke-width="1.5"/><path d="M287.40,930.30 L296.00,925.50" stroke="#5e5e5e" stroke-width="1.5"/><path d="M287.40,930.30 L278.80,935.10" stroke="#5e5e5e" stroke-width="1.5"/>
<path d="M328.60,920.70 L337.20,925.50 L337.20,935.10 L328.60,939.90 L320.00,935.10 L320.00,925.50Z" fill="#1c1c1c" stroke="#5e5e5e" stroke-width="1.5" stroke-linejoin="round"/><path d="M329.80,930.97 L336.00,927.52 L336.00,934.43 L329.80,937.88Z" fill="#f4f4f4"/><path d="M328.60,930.30 L320.00,925.50" stroke="#5e5e5e" stroke-width="1.5"/><path d="M328.60,930.30 L337.20,925.50" stroke="#5e5e5e" stroke-width="1.5"/><path d="M328.60,930.30 L328.60,939.90" stroke="#5e5e5e" stroke-width="1.5"/>
<path d="M369.80,920.70 L378.40,925.50 L378.40,935.10 L369.80,939.90 L361.20,935.10 L361.20,925.50Z" fill="#1c1c1c" stroke="#5e5e5e" stroke-width="1.5" stroke-linejoin="round"/><path d="M362.40,927.52 L368.60,930.97 L368.60,937.88 L362.40,934.43Z" fill="#f4f4f4"/><path d="M369.80,930.30 L361.20,925.50" stroke="#5e5e5e" stroke-width="1.5"/><path d="M369.80,930.30 L378.40,925.50" stroke="#5e5e5e" stroke-width="1.5"/><path d="M369.80,930.30 L369.80,939.90" stroke="#5e5e5e" stroke-width="1.5"/>
<path d="M411.50,920.70 L420.10,925.50 L420.10,935.10 L411.50,939.90 L402.90,935.10 L402.90,925.50Z" fill="#1c1c1c" stroke="#5e5e5e" stroke-width="1.5" stroke-linejoin="round"/><path d="M412.70,922.72 L418.90,926.17 L418.90,933.08 L412.70,929.63Z" fill="#f4f4f4"/><path d="M411.50,920.70 L411.50,939.90" stroke="#5e5e5e" stroke-width="1.5"/><path d="M411.50,930.30 L402.90,925.50" stroke="#5e5e5e" stroke-width="1.5"/><path d="M411.50,930.30 L420.10,935.10" stroke="#5e5e5e" stroke-width="1.5"/>
<path d="M452.40,920.70 L461.00,925.50 L461.00,935.10 L452.40,939.90 L443.80,935.10 L443.80,925.50Z" fill="#1c1c1c" stroke="#5e5e5e" stroke-width="1.5" stroke-linejoin="round"/><path d="M452.40,931.64 L458.59,935.10 L452.40,938.56 L446.21,935.10Z" fill="#f4f4f4"/><path d="M452.40,930.30 L443.80,925.50" stroke="#5e5e5e" stroke-width="1.5"/><path d="M452.40,930.30 L461.00,925.50" stroke="#5e5e5e" stroke-width="1.5"/><path d="M452.40,930.30 L443.80,935.10" stroke="#5e5e5e" stroke-width="1.5"/><path d="M452.40,930.30 L461.00,935.10" stroke="#5e5e5e" stroke-width="1.5"/>
<circle cx="507.7" cy="930.3" r="8.6" fill="#f4f4f4"/><rect x="507" y="921" width="1.4" height="18.6" fill="#232323"/>
<circle cx="550.8" cy="929.3" r="6.2" fill="#f4f4f4"/><path d="M545.2,924.8 A6.8,6.8 0 0 0 550.8,937.2" stroke="#f4f4f4" stroke-width="1.2" fill="none"/><path d="M543,926.5 A6.2,6.2 0 0 0 547.8,937.8" stroke="#f4f4f4" stroke-width="1" fill="none"/>
<path d="M598.5,932.6999999999999 L602.1,928.9 L605.7,932.6999999999999Z" fill="#f4f4f4"/>
<circle cx="643.2" cy="930.7" r="1.6" fill="#f4f4f4"/>
<path d="M681.1999999999999,929.1 L684.8,932.9 L688.4,929.1Z" fill="#f4f4f4"/>
<path d="M739.3,927.1 L735.5,930.7 L739.3,934.3000000000001Z" fill="#f4f4f4"/>
<circle cx="779" cy="930.7" r="1.6" fill="#f4f4f4"/>
<path d="M818.2,927.1 L822,930.7 L818.2,934.3000000000001Z" fill="#f4f4f4"/>
<path d="M869.6999999999999,932.6999999999999 L873.3,928.9 L876.9,932.6999999999999Z" fill="#f4f4f4"/>
<circle cx="914.2" cy="930.7" r="1.6" fill="#f4f4f4"/>
<path d="M952.1,929.1 L955.7,932.9 L959.3000000000001,929.1Z" fill="#f4f4f4"/>
<circle cx="1010.6" cy="930.7" r="7.5" fill="#f4f4f4"/><circle cx="1052.3" cy="930.7" r="7" fill="none" stroke="#f4f4f4" stroke-width="1.6"/>
<path d="M1107.40,923.40 L1113.60,926.90 L1113.60,933.90 L1107.40,937.40 L1101.20,933.90 L1101.20,926.90Z M1101.20,926.90 L1107.40,930.40 L1113.60,926.90 M1107.40,930.40 L1107.40,937.40" fill="none" stroke="#f4f4f4" stroke-width="1.5" stroke-linejoin="round"/>
<path d="M1148.60,923.40 L1154.80,926.90 L1154.80,933.90 L1148.60,937.40 L1142.40,933.90 L1142.40,926.90Z M1142.40,926.90 L1148.60,930.40 L1154.80,926.90 M1148.60,930.40 L1148.60,937.40" fill="none" stroke="#f4f4f4" stroke-width="1.5" stroke-linejoin="round"/>
<g transform="translate(1203,930.7) rotate(-42)"><rect x="-11" y="-2.6" width="22" height="5.6" fill="#f4f4f4"/><rect x="-9.0" y="-5.6" width="1.2" height="3.2" fill="#f4f4f4"/><rect x="-5.8" y="-4.6" width="1.2" height="3.2" fill="#f4f4f4"/><rect x="-2.6" y="-5.6" width="1.2" height="3.2" fill="#f4f4f4"/><rect x="0.6" y="-4.6" width="1.2" height="3.2" fill="#f4f4f4"/><rect x="3.8" y="-5.6" width="1.2" height="3.2" fill="#f4f4f4"/><rect x="7.0" y="-4.6" width="1.2" height="3.2" fill="#f4f4f4"/><rect x="10.2" y="-5.6" width="1.2" height="3.2" fill="#f4f4f4"/></g>
<path d="M1253.2,927.3 A7,7 0 1 1 1252.6,932.8" fill="none" stroke="#f4f4f4" stroke-width="1.7"/><path d="M1250.5,924.6 L1251.2,930.6 L1256.8,928.8Z" fill="#f4f4f4"/>
</svg>
</body></html>
